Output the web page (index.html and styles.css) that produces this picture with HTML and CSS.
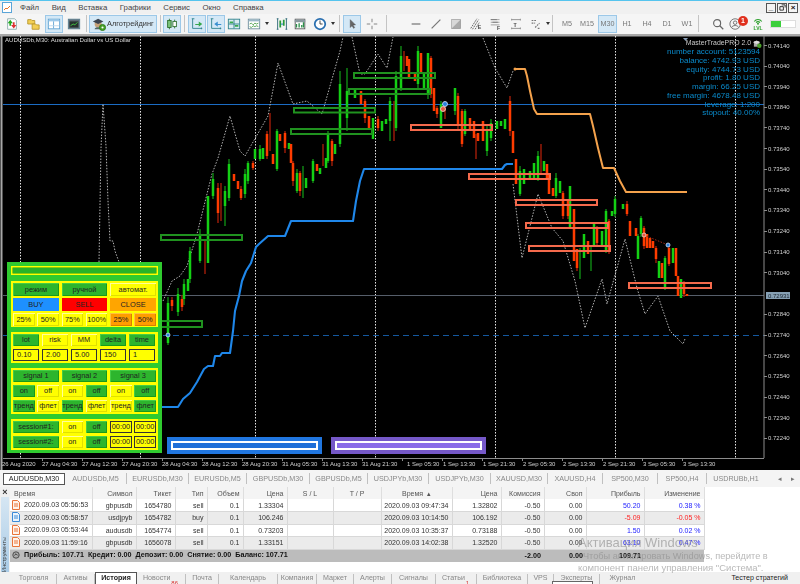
FILE: index.html
```html
<!DOCTYPE html>
<html lang="ru">
<head>
<meta charset="utf-8">
<title>MetaTrader 5</title>
<link rel="stylesheet" href="styles.css">
</head>
<body>
<div class="app">
  <div class="topline"></div>
  <header class="menu">
    <svg class="appicon" viewBox="0 0 10 11"><rect x=".5" y=".5" width="9" height="10" fill="#fff" stroke="#5aa5d8"/><path d="M2 8l2-2 1 1 3-3" fill="none" stroke="#e8742a"/></svg>
    <nav class="menuitems"><span>Файл</span><span>Вид</span><span>Вставка</span><span>Графики</span><span>Сервис</span><span>Окно</span><span>Справка</span></nav>
    <div class="winbtns">
      <span class="winbtn">_</span>
      <span class="winbtn"><svg viewBox="0 0 8 8"><path d="M3 1h4v3M1 3h4v4H1z" fill="none" stroke="#222"/></svg></span>
      <span class="winbtn winx">×</span>
    </div>
  </header>

  <div class="toolbar">
    <span class="b"><svg viewBox="0 0 16 16"><path d="M3 2h8l2 2v10H3z" fill="#fff" stroke="#8aa"/><path d="M6 3l3 4H7v3H5V7H3z" fill="#2a2"/><path d="M10 13l-3-4h2V6h2v3h2z" fill="#d33"/></svg></span>
    <span class="b m3"><svg viewBox="0 0 16 16"><path d="M2 3h4l1 1h3v4H2z" fill="#f2cf55" stroke="#b8962a"/><path d="M7 8h4l1 1h3v5H7z" fill="#f2cf55" stroke="#b8962a"/></svg></span>
    <span class="b m3 on"><svg viewBox="0 0 16 16"><rect x="1.5" y="2.5" width="13" height="11" fill="#fff" stroke="#5a9fd0"/><path d="M2 3h12v2H2z" fill="#9cc8ea"/><path d="M7.5 5v8" stroke="#5a9fd0"/><path d="M2 10h12" stroke="#b9d6ec"/></svg></span>
    <span class="b m2"><svg viewBox="0 0 16 16"><rect x="1.5" y="2.5" width="13" height="11" fill="#5e6a74" stroke="#5a7f90"/><rect x="3" y="5" width="10" height="7" fill="#26322e"/><path d="M4 10l3-2 2 1 3-3" fill="none" stroke="#4c4"/></svg></span>
    <span class="sep m3"></span>
    <span class="algo m2 on"><svg viewBox="0 0 16 16"><circle cx="7" cy="8" r="4" fill="#c7a27a"/><path d="M1 5l6-3 6 3-6 3z" fill="#3c4450"/><path d="M3 14c0-3 8-3 8 0z" fill="#566"/><circle cx="12" cy="12" r="3.5" fill="#4aa02a" stroke="#2b7a12"/><circle cx="12" cy="12" r="1.2" fill="#fff"/></svg>Алготрейдинг</span>
    <span class="sep m3"></span>
    <span class="b m2 on"><svg viewBox="0 0 16 16"><path d="M5 2v12M11 3v10" stroke="#2c6e2c"/><rect x="3" y="4" width="4" height="8" fill="#7bc47b" stroke="#2c6e2c"/><rect x="9" y="5" width="4" height="6" fill="#fff" stroke="#2c6e2c"/></svg></span>
    <span class="sep m3"></span>
    <span class="b m3 on"><svg viewBox="0 0 16 16"><path d="M3 2v11h11M2 2h3M13 12v2" fill="none" stroke="#2a7f8a"/><path d="M6 8h4V5l4 3-4 3V9H6z" fill="#36a84c"/></svg></span>
    <span class="b m1 on"><svg viewBox="0 0 16 16"><path d="M3 2v11h11M2 2h3M13 12v2" fill="none" stroke="#2a7f8a"/><path d="M14 8h-4V5L6 8l4 3V9h4z" fill="#3a8fd0"/></svg></span>
    <span class="b"><svg viewBox="0 0 16 16"><rect x="1.5" y="2.5" width="13" height="11" fill="#d8ecf2" stroke="#2a7f8a"/><path d="M8 3v10M2 8h12" stroke="#2a7f8a"/><path d="M3 6h4M9 10h4" stroke="#36a84c" stroke-width="2"/></svg></span>
    <span class="b m2"><svg viewBox="0 0 16 16"><rect x="1.5" y="2.5" width="13" height="11" fill="#fff" stroke="#6a8a9a"/><path d="M2 3h12v2H2z" fill="#9cb8c8"/><path d="M3 8l2-1 2 2 2-2 2 1 2-1M3 11l2 1 2-2 2 1 2-1 2 1" fill="none" stroke="#4aa04a"/></svg></span>
    <span class="arr"></span>
    <span class="b m2"><svg viewBox="0 0 16 16"><path d="M3 2v12M13 2v12M2 2h2M2 14h2M12 2h2M12 14h2" stroke="#22606e"/><path d="M6 4v8M10 3v7" stroke="#2a9a3a" stroke-width="2"/><circle cx="8" cy="8" r="1" fill="#3a8fd0"/></svg></span>
    <span class="b"><svg viewBox="0 0 16 16"><rect x="2.5" y="2.5" width="11" height="11" fill="#fff" stroke="#555"/><path d="M2 3h12v3H2z" fill="#8a9aa0"/><path d="M4 12V8M7 12V7M10 12V9M12 12V6" stroke="#2a8f4a" stroke-width="1.5"/></svg></span>
    <span class="b m2"><svg viewBox="0 0 16 16"><circle cx="8" cy="8" r="6" fill="#fff" stroke="#2a6fb0" stroke-width="2"/><path d="M8 4v4h3" fill="none" stroke="#333"/></svg></span>
    <span class="arr"></span>
    <span class="sep m2"></span>
    <span class="b m3 on"><svg viewBox="0 0 16 16"><path d="M6 3v9l2-2 2 3 1-1-2-3h3z" fill="#666" stroke="#444" stroke-width=".5"/></svg></span>
    <span class="b m2"><svg viewBox="0 0 16 16"><path d="M8 2v4M8 10v4M2 8h4M10 8h4" stroke="#777"/></svg></span>
    <span class="sep m5"></span>
    <span class="b m20"><svg viewBox="0 0 16 16"><path d="M3 8h10" stroke="#777" stroke-width="1.4"/></svg></span>
    <span class="b m2"><svg viewBox="0 0 16 16"><path d="M3 13L13 3" stroke="#777" stroke-width="1.4"/></svg></span>
    <span class="b m2"><svg viewBox="0 0 16 16"><rect x="3" y="3" width="10" height="10" fill="#aaa" stroke="#999"/><path d="M3 3h10L3 13z" fill="#d8d8d8"/></svg></span>
    <span class="b m2"><svg viewBox="0 0 16 16"><path d="M2 13L9 2M4 14l7-11M7 14l5-8" stroke="#555" stroke-dasharray="2 1"/><text x="10" y="14" class="ict">E</text></svg></span>
    <span class="b m2"><svg viewBox="0 0 16 16"><path d="M2 3h10M2 6h10M2 9h10" stroke="#999"/><path d="M2 3h7M4 6h6" stroke="#777"/><text x="9" y="15" class="ict">F</text></svg></span>
    <span class="b m2"><svg viewBox="0 0 16 16"><path d="M3 3h10M3 13h10M3 2v2M13 2v2M3 12v2M13 12v2" stroke="#888"/><text x="5" y="11.500" class="ict">T</text></svg></span>
    <span class="b m2"><svg viewBox="0 0 16 16"><path d="M3 4h6M3 7h4M7 12l5-5M10 13h3" stroke="#777" stroke-width="1.3" stroke-dasharray="2 1"/></svg></span>
    <span class="arr narrow"></span>
    <span class="sep m1"></span>
    <span class="tf m4">M5</span><span class="tf">M15</span><span class="tf m1 on">M30</span><span class="tf">H1</span><span class="tf">H4</span><span class="tf">D1</span><span class="tf">W1</span>
    <span class="sep m1"></span>
    <span class="b m10"><svg viewBox="0 0 16 16"><circle cx="7" cy="7" r="4" fill="none" stroke="#666" stroke-width="1.3"/><path d="M10 10l4 4" stroke="#666" stroke-width="1.5"/></svg></span>
    <span class="b user"><svg viewBox="0 0 16 16"><circle cx="7" cy="8" r="6" fill="none" stroke="#666"/><circle cx="7" cy="6.500" r="2" fill="none" stroke="#666"/><path d="M3 12c1-3 7-3 8 0" fill="none" stroke="#666"/></svg><i class="badge">1</i></span>
    <span class="b lvl m4"><svg viewBox="0 0 16 12"><path d="M3 6a6 6 0 0 1 10 0M5.500 7.500a3 3 0 0 1 5 0" fill="none" stroke="#2ca02c" stroke-width="1.4"/><circle cx="8" cy="9" r="1.300" fill="#2ca02c"/></svg><i>LVL</i></span>
    <span class="level m3"><i></i></span>
  </div>

  <main class="chart">
    <svg class="plot" viewBox="0 34 800 435" width="800" height="435">
      <path class="frame" d="M1.500 34V469M0 34.500H800"/>
      <g class="vgrid">
        <path d="M20.500 35V457M140.500 35V457M255.500 35V457M375.500 35V457M495.500 35V457M615.500 35V457M735.500 35V457"/>
      </g>
      <path class="hline" d="M3 103.500H764"/>
      <path class="gline" d="M3 294.500H764"/>
      <path class="dashline" d="M3 334.500H764"/>
      <path class="dots" d="M99 261L101 147 103 103 106 145 108 200 110 240 113 240 115 250 119 261M163 300L172 280 180 275 187 265 197 233 212 173 218 157 230 115 240 150 245 155 268 115 278 62 293 103 307 100 322 113 340 50 343 36M352 36L360 73 365 73 378 53 387 67 393 36M483 37L495 67 507 87 513 70"/>
      <path class="dots" d="M513 183L522 257 538 193 552 227 563 240 575 280 585 327 602 278 607 303 625 238 637 287 645 313 658 295 670 330 683 343 685 338"/>
      <path class="orange" d="M515 68H525L527 75 530 90 534 108 537 113H590L593 125 598 147 603 167H614L620 180 626 191H687"/>
      <circle cx="515" cy="68" r="1.500" fill="#f4a24c"/>
      <path class="blueline" d="M162 406H178L183 398 190 392 197 381 204 368 208 365H213L215 355H220L222 352H230L233 330 235 310 239 295 242 280 246 270 251 262 256 246 259 243 268 235H285L291 220H353L356 200 360 180 364 168H502L505 164 507 163H513"/>
      <path class="wg" d="M168 296V344M178 287V315M184 278V304M190 246V282M200 228V262M213 172V198M225 185V225M229 158V200M245 168V197M248 160V183M260 144V160M277 128V170M297 168V192M303 165V197M313 158V182M328 130V162M340 70V146M347 67V130M390 96V140M396 70V130M401 45V90M418 45V88M428 52V98M441 100V127M455 87V114M465 108V135M487 125V155M491 118V140M520 165V195M538 150V180M556 172V197M570 185V227M580 247V278M591 245V270M606 208V252M615 195V216M638 233V258M641 215V236M665 255V289"/>
      <path class="wr" d="M172 296V310M182 294V310M205 238V273M218 182V222M221 182V220M241 185V199M253 160V169M267 130V158M270 112V150M285 130V152M293 160V185M300 170V195M323 143V165M332 138V165M365 98V122M378 115V130M394 100V140M404 50V70M431 55V97M437 105V117M445 100V118M458 92V128M462 108V146M476 133V158M510 95V135M541 143V172M563 190V218M568 198V218M577 248V270M597 225V245M609 218V253M627 200V215M644 225V248M656 245V262M669 245V265M684 280V296"/>
      <path class="bg" d="M168 302V342M178 293V311M184 283V298M188 278V290M190 250V278M200 233V260M208 195V262M213 178V195M225 190V205M229 163V197M245 173V193M248 162V180M255 148V158M260 148V158M263 147V158M277 130V168M289 142V148M297 172V190M306 177V187M313 160V180M320 167V173M326 157V167M328 133V160M335 143V153M340 83V143M347 90V117M355 88V97M373 117V138M382 120V130M386 118V123M390 100V120M396 75V127M401 55V87M418 50V83M424 73V87M428 52V93M441 103V127M455 87V110M465 110V133M487 130V150M491 122V137M497 120V128M501 120V125M505 118V128M520 170V193M524 168V183M530 170V178M534 162V177M538 155V177M544 160V170M556 177V195M560 180V192M570 185V227M584 233V257M594 223V245M602 230V245M606 210V250M612 210V215M615 198V213M623 203V208M638 235V258M641 217V233M659 260V277M665 257V287M673 247V262M681 278V297"/>
      <path class="br" d="M172 299V305M182 298V306M218 187V212M234 173V180M238 180V188M241 188V197M253 162V167M267 133V155M273 153V163M280 133V140M285 132V147M291 143V162M293 162V180M300 172V190M317 163V170M332 140V160M361 90V103M365 100V117M369 115V128M378 118V127M407 55V65M409 58V78M415 73V80M421 52V73M431 57V93M434 87V110M437 107V113M458 95V123M462 110V143M470 117V130M474 120V137M478 132V140M483 120V140M510 100V130M513 130V152M516 158V183M547 163V177M549 173V193M553 187V195M563 192V215M568 200V215M574 208V260M577 248V267M588 240V253M597 227V242M609 220V250M627 203V213M630 220V235M636 227V235M644 227V245M647 233V247M650 237V247M653 240V247M656 247V258M662 262V277M669 247V263M676 247V275M678 275V295M684 282V293M687 293V295"/>
      <g class="zg">
        <rect x="161" y="234" width="81" height="5"/>
        <rect x="291" y="128" width="81" height="5"/>
        <rect x="294" y="107" width="81" height="4.500"/>
        <rect x="349" y="88" width="81" height="5"/>
        <rect x="354" y="72" width="81" height="5"/>
        <rect x="122" y="320" width="80" height="6"/>
      </g>
      <g class="zr">
        <rect x="411" y="124" width="81" height="5"/>
        <rect x="469" y="173" width="81" height="5"/>
        <rect x="516" y="199" width="81" height="5"/>
        <rect x="526" y="222" width="82" height="5"/>
        <rect x="529" y="245" width="81" height="5"/>
        <rect x="629" y="282" width="82" height="5"/>
      </g>
      <path class="trade" d="M644 234L668 244"/>
      <circle class="mk-b" cx="445" cy="103" r="2.500"/>
      <circle class="mk-r" cx="443" cy="108" r="2.500"/>
      <circle class="mk-r" cx="644" cy="234" r="2"/>
      <circle class="mk-b" cx="668" cy="244" r="2"/>
      <circle class="mk-b" cx="168" cy="334" r="2"/>
      <g class="boxes">
        <rect class="bb" x="167" y="436" width="155" height="17"/>
        <rect class="bi" x="172" y="441" width="145" height="7"/>
        <rect class="pb" x="331" y="436" width="155" height="17"/>
        <rect class="pi" x="336" y="441" width="145" height="7"/>
      </g>
      <path class="axis" d="M764 35V457M3 457.500H764"/>
      <path class="ticks" d="M764 44.500h3M764 65.500h3M764 85.500h3M764 106.500h3M764 126.500h3M764 147.500h3M764 168.500h3M764 188.500h3M764 209.500h3M764 230.500h3M764 251.500h3M764 271.500h3M764 313.500h3M764 334.500h3M764 354.500h3M764 375.500h3M764 396.500h3M764 416.500h3M764 437.500h3M42.500 457v3M82.500 457v3M122.500 457v3M162.500 457v3M202.500 457v3M242.500 457v3M282.500 457v3M322.500 457v3M362.500 457v3M402.500 457v3M442.500 457v3M482.500 457v3M522.500 457v3M562.500 457v3M602.500 457v3M642.500 457v3M682.500 457v3"/>
      <g class="prices">
        <text x="768" y="46.500">0.74140</text><text x="768" y="67">0.74040</text><text x="768" y="87.500">0.73940</text><text x="768" y="108">0.73840</text>
        <text x="768" y="128.500">0.73740</text><text x="768" y="149.500">0.73640</text><text x="768" y="170">0.73540</text><text x="768" y="190.500">0.73440</text>
        <text x="768" y="211">0.73340</text><text x="768" y="232">0.73240</text><text x="768" y="253">0.73140</text><text x="768" y="273.500">0.73040</text>
        <text x="768" y="315">0.72840</text><text x="768" y="336">0.72740</text><text x="768" y="356.500">0.72640</text><text x="768" y="377">0.72540</text>
        <text x="768" y="398">0.72440</text><text x="768" y="418.500">0.72340</text><text x="768" y="439">0.72240</text>
      </g>
      <rect class="pricebox" x="766" y="291" width="24" height="7"/>
      <text class="pricecur" x="768" y="296.500">0.72931</text>
      <g class="times">
        <text x="2" y="465">26 Aug 2020</text><text x="42" y="465">27 Aug 04:30</text><text x="82" y="465">27 Aug 12:30</text><text x="122" y="465">27 Aug 20:30</text>
        <text x="162" y="465">28 Aug 04:30</text><text x="202" y="465">28 Aug 12:30</text><text x="242" y="465">28 Aug 20:30</text><text x="282" y="465">31 Aug 05:30</text>
        <text x="322" y="465">31 Aug 13:30</text><text x="362" y="465">31 Aug 21:30</text><text x="407" y="465">1 Sep 05:30</text><text x="443" y="465">1 Sep 13:30</text>
        <text x="483" y="465">1 Sep 21:30</text><text x="523" y="465">2 Sep 05:30</text><text x="563" y="465">2 Sep 13:30</text><text x="603" y="465">2 Sep 21:30</text>
        <text x="643" y="465">3 Sep 05:30</text><text x="683" y="465">3 Sep 13:30</text>
      </g>
      <text class="sym" x="5" y="40.500">AUDUSDb,M30:  Australian Dollar vs US Dollar</text>
      <path d="M683 37h5l-2.500 3z" fill="#8aa0b8"/>
    </svg>

    <aside class="ea">
      <div class="eahead">MasterTradePRO 2.0 <svg viewBox="0 0 10 10"><rect x="1" y="2" width="6" height="6" fill="#aaa"/><circle cx="7" cy="7" r="2.500" fill="#4aa02a"/><path d="M0 3l4-2 4 2-4 2z" fill="#ddd"/></svg></div>
      <div>number account: 5123594</div>
      <div>balance: 4742.93 USD</div>
      <div>equity: 4744.73 USD</div>
      <div>profit: 1.80 USD</div>
      <div>margin: 66.25 USD</div>
      <div>free margin: 4678.48 USD</div>
      <div>leverage: 1:200</div>
      <div>stopout: 40.00%</div>
    </aside>

    <section class="panel">
      <div class="psec pbar"><i></i></div>
      <div class="psec six">
        <span class="btn g w2">режим</span><span class="btn g w2">ручной</span><span class="btn y w2">автомат.</span>
        <span class="btn buy w2">BUY</span><span class="btn sell w2">SELL</span><span class="btn close w2">CLOSE</span>
        <span class="btn y">25%</span><span class="btn y">50%</span><span class="btn y">75%</span><span class="btn y">100%</span><span class="btn o">25%</span><span class="btn o">50%</span>
      </div>
      <div class="psec five">
        <span class="btn g">lot</span><span class="btn y">risk</span><span class="btn y">MM</span><span class="btn g">delta</span><span class="btn g">time</span>
        <span class="inp">0.10</span><span class="inp">2.00</span><span class="inp">5.00</span><span class="inp">150</span><span class="inp">1</span>
      </div>
      <div class="psec six loose">
        <span class="btn g w2">signal 1</span><span class="btn g w2">signal 2</span><span class="btn g w2">signal 3</span>
        <span class="btn g">on</span><span class="btn y">off</span><span class="btn y">on</span><span class="btn g">off</span><span class="btn y">on</span><span class="btn g">off</span>
        <span class="btn g">тренд</span><span class="btn y">флет</span><span class="btn g">тренд</span><span class="btn y">флет</span><span class="btn y">тренд</span><span class="btn g">флет</span>
      </div>
      <div class="psec six loose2">
        <span class="btn g w2">session#1:</span><span class="btn y">on</span><span class="btn g">off</span><span class="inp c">00:00</span><span class="inp c">00:00</span>
        <span class="btn g w2">session#2:</span><span class="btn y">on</span><span class="btn g">off</span><span class="inp c">00:00</span><span class="inp c">00:00</span>
      </div>
    </section>
  </main>

  <div class="charttabs">
    <span class="ct active">AUDUSDb,M30</span><span class="ct">AUDUSDb,M5</span><span class="ct">EURUSDb,M30</span><span class="ct">EURUSDb,M5</span><span class="ct">GBPUSDb,M30</span><span class="ct">GBPUSDb,M5</span><span class="ct">USDJPYb,M30</span><span class="ct">USDJPYb,M30</span><span class="ct">XAUUSD,M30</span><span class="ct">XAUUSD,H4</span><span class="ct">SP500,M30</span><span class="ct">SP500,H4</span><span class="ct">USDRUBb,H1</span>
    <span class="ctarrows"><span>◂</span><span>▸</span></span>
  </div>

  <div class="toolbox">
    <div class="side"><span class="sidex">×</span><div class="sidestrip"><span>Инструменты</span></div></div>
    <div class="history">
      <table>
        <colgroup>
          <col class="c82"><col class="c44"><col class="c39"><col class="c32"><col class="c36"><col class="c44"><col class="c46"><col class="c48"><col class="c71"><col class="c49"><col class="c43"><col class="c42"><col class="c58"><col class="c60">
        </colgroup>
        <thead>
          <tr><th class="l">Время</th><th>Символ</th><th>Тикет</th><th>Тип</th><th>Объем</th><th>Цена</th><th class="m">S / L</th><th class="m">T / P</th><th class="m">Время &nbsp;▴</th><th>Цена</th><th>Комиссия</th><th>Своп</th><th>Прибыль</th><th>Изменение</th></tr>
        </thead>
        <tbody>
          <tr><td class="l"><span class="tm"><svg class="doc" viewBox="0 0 8 10"><path d="M.5.5h5l2 2v7h-7z" fill="#fff3ea" stroke="#e8743a"/><path d="M2 4h4M2 6h4" stroke="#e8743a"/></svg>2020.09.03 05:56:53</span></td><td>gbpusdb</td><td>1654780</td><td>sell</td><td>0.1</td><td>1.33304</td><td></td><td></td><td>2020.09.03 09:47:34</td><td>1.32802</td><td>-0.50</td><td>0.00</td><td class="pos">50.20</td><td class="pos">0.38 %</td></tr>
          <tr><td class="l"><span class="tm"><svg class="doc" viewBox="0 0 8 10"><path d="M.5.5h5l2 2v7h-7z" fill="#eaf4fc" stroke="#3a8ad8"/><path d="M2 4h4M2 6h4" stroke="#3a8ad8"/></svg>2020.09.03 05:58:57</span></td><td>usdjpyb</td><td>1654782</td><td>buy</td><td>0.1</td><td>106.246</td><td></td><td></td><td>2020.09.03 10:14:50</td><td>106.192</td><td>-0.50</td><td>0.00</td><td class="neg">-5.09</td><td class="neg">-0.05 %</td></tr>
          <tr><td class="l"><span class="tm"><svg class="doc" viewBox="0 0 8 10"><path d="M.5.5h5l2 2v7h-7z" fill="#fff3ea" stroke="#e8743a"/><path d="M2 4h4M2 6h4" stroke="#e8743a"/></svg>2020.09.03 05:53:44</span></td><td>audusdb</td><td>1654774</td><td>sell</td><td>0.1</td><td>0.73203</td><td></td><td></td><td>2020.09.03 10:35:37</td><td>0.73188</td><td>-0.50</td><td>0.00</td><td class="pos">1.50</td><td class="pos">0.02 %</td></tr>
          <tr><td class="l"><span class="tm"><svg class="doc" viewBox="0 0 8 10"><path d="M.5.5h5l2 2v7h-7z" fill="#fff3ea" stroke="#e8743a"/><path d="M2 4h4M2 6h4" stroke="#e8743a"/></svg>2020.09.03 11:59:16</span></td><td>gbpusdb</td><td>1656078</td><td>sell</td><td>0.1</td><td>1.33151</td><td></td><td></td><td>2020.09.03 14:02:38</td><td>1.32520</td><td>-0.50</td><td>0.00</td><td class="pos">63.10</td><td class="pos">0.47 %</td></tr>
        </tbody>
        <tfoot>
          <tr><td colspan="10" class="l sum"><span class="tm"><svg class="doc" viewBox="0 0 10 10"><circle cx="5" cy="5" r="4" fill="#aaa" stroke="#333"/><path d="M3 5.500l2-2 2 2" fill="none" stroke="#222"/></svg>Прибыль: 107.71&nbsp; Кредит: 0.00&nbsp; Депозит: 0.00&nbsp; Снятие: 0.00&nbsp; Баланс: 107.71</span></td><td>-2.00</td><td>0.00</td><td>109.71</td><td></td></tr>
        </tfoot>
      </table>
    </div>
  </div>

  <div class="bottomtabs">
    <span class="bt">Торговля</span><span class="bt">Активы</span><span class="bt active">История</span><span class="bt news">Новости<sub>86</sub></span><span class="bt">Почта</span><span class="bt">Календарь</span><span class="bt">Компания</span><span class="bt">Маркет</span><span class="bt">Алерты</span><span class="bt">Сигналы</span><span class="bt news">Статьи<sub>1</sub></span><span class="bt">Библиотека</span><span class="bt">VPS</span><span class="bt">Эксперты</span><span class="bt last">Журнал</span>
    <span class="tester">Тестер стратегий</span>
  </div>

  <div class="watermark">
    <div class="wm1">Активация Windows</div>
    <div class="wm2">Чтобы активировать Windows, перейдите в</div>
    <div class="wm3">компонент панели управления "Система".</div>
  </div>
  <div class="tipbox"></div>
</div>
</body>
</html>
```

FILE: styles.css
```css
* { box-sizing: border-box; }
html, body { margin: 0; padding: 0; background: #f0f0f0; }
.app {
  position: relative;
  width: 800px;
  height: 584px;
  overflow: hidden;
  display: flex;
  flex-direction: column;
  font: 7.1px/1 "Liberation Sans", Arial, sans-serif;
  color: #333;
  filter: blur(.25px);
}
.topline { height: 1px; background: #55c4ee; flex: none; }

/* menu */
.menu { height: 13px; flex: none; display: flex; align-items: center; background: #f0f0f0; padding-left: 2px; }
.appicon { width: 10px; height: 11px; flex: none; }
.menuitems { display: flex; gap: 12.5px; margin-left: 8px; font-size: 7.8px; color: #444; }
.winbtns { margin-left: auto; display: flex; gap: 1px; padding-right: 2px; }
.winbtn { width: 10px; height: 10px; border: 1px solid #555; background: #f4f4f4; display: flex; align-items: center; justify-content: center; font-size: 8px; font-weight: bold; color: #111; }
.winbtn svg { width: 7px; height: 7px; }

/* toolbar */
.toolbar { height: 21px; flex: none; display: flex; align-items: center; padding: 0 0 1px 3px; background: #f5f5f5; border-bottom: 1px solid #a8a8a8; }
.b { width: 18px; height: 18px; flex: none; display: flex; align-items: center; justify-content: center; position: relative; }
.b svg { width: 14px; height: 14px; }
.ict { font: bold 6px "Liberation Sans", sans-serif; fill: #444; }
.on { background: #d4e8f6; box-shadow: inset 0 0 0 1px #9cc8e8; }
.sep { width: 1px; height: 17px; background: #c4c4c4; flex: none; }
.m1 { margin-left: 1px; } .m2 { margin-left: 2px; } .m3 { margin-left: 3px; } .m4 { margin-left: 4px; }
.m5 { margin-left: 5px; } .m10 { margin-left: 10px; } .m20 { margin-left: 20px; }
.algo { width: 68px; height: 18px; flex: none; display: flex; align-items: center; gap: 1px; padding-left: 3px; font-size: 7.4px; color: #333; }
.algo svg { width: 14px; height: 14px; flex: none; }
.arr { width: 8px; height: 18px; flex: none; display: flex; align-items: center; justify-content: center; }
.arr::after { content: ""; border: 2.5px solid transparent; border-top: 3px solid #333; border-bottom: 0; }
.arr.narrow { width: 6px; }
.tf { width: 20px; height: 18px; flex: none; display: flex; align-items: center; justify-content: center; color: #777; font-size: 7.2px; }
.tf.on { width: 19px; }
.user { overflow: visible; }
.badge { position: absolute; right: -3px; top: 1px; width: 10px; height: 10px; border-radius: 50%; background: #e0301e; color: #fff; font: bold 7px/10px "Liberation Sans", sans-serif; text-align: center; }
.lvl { flex-direction: column; }
.lvl svg { width: 12px; height: 9px; }
.lvl i { font: bold 5px/1 "Liberation Sans", sans-serif; color: #2ca02c; }
.level { width: 26px; height: 8px; background: #fff; border: 1px solid #ddd; flex: none; display: block; }
.level i { display: block; width: 10px; height: 6px; background: #3ccf3c; }

/* chart */
.chart { position: relative; height: 435px; flex: none; background: #000; overflow: hidden; }
.plot { display: block; }
.frame { fill: none; stroke: #a8a8a8; stroke-width: 2; }
.vgrid path { fill: none; stroke: #e6e6e6; stroke-width: 1; stroke-dasharray: 1.5 1.5; }
.hline { fill: none; stroke: #1b6cc4; stroke-width: 1.2; }
.gline { fill: none; stroke: #565e6a; stroke-width: 1; }
.dashline { fill: none; stroke: #14589f; stroke-width: 1; stroke-dasharray: 6 4; }
.dots { fill: none; stroke: #b4b4b4; stroke-width: 1; stroke-dasharray: 1.5 1.5; }
.orange { fill: none; stroke: #f4a24c; stroke-width: 2; stroke-linejoin: round; }
.blueline { fill: none; stroke: #1f87ea; stroke-width: 2.1; stroke-linejoin: round; }
.wg { fill: none; stroke: #0e7a12; stroke-width: 1.6; }
.wr { fill: none; stroke: #8e1a08; stroke-width: 1.6; }
.bg { fill: none; stroke: #14d014; stroke-width: 2.5; }
.br { fill: none; stroke: #ff3c00; stroke-width: 2.5; }
.zg rect { fill: none; stroke: #20921f; stroke-width: 2; }
.zr rect { fill: none; stroke: #f56a4c; stroke-width: 2; }
.trade { fill: none; stroke: #a02818; stroke-width: 1; stroke-dasharray: 1.5 1.5; }
.mk-b { fill: #2a7fdc; stroke: #cfe2f6; stroke-width: .8; }
.mk-r { fill: #e25a40; stroke: #f6d8d0; stroke-width: .8; }
.bb { fill: #2076e0; }
.bi { fill: #1f6fd8; stroke: #fff; stroke-width: 2; }
.pb { fill: #7558c8; }
.pi { fill: #8a6ce8; stroke: #fff; stroke-width: 2; }
.axis, .ticks { fill: none; stroke: #8c8c8c; stroke-width: 1; }
.prices text, .times text { font: 6px "Liberation Sans", sans-serif; fill: #d0d0d0; }
.pricebox { fill: #86a0b4; }
.pricecur { font: 6px "Liberation Sans", sans-serif; fill: #1a2530; }
.sym { font: 6.1px "Liberation Sans", sans-serif; fill: #dcdcdc; }

/* EA info block */
.ea { position: absolute; right: 40px; top: 4px; text-align: right; font-size: 8px; line-height: 8.75px; color: #0a8acb; }
.eahead { color: #c8c8c8; font-size: 6.9px; display: flex; justify-content: flex-end; align-items: center; gap: 2px; margin-right: -2px; height: 9px; }
.eahead svg { width: 9px; height: 10px; }

/* trade panel */
.panel { position: absolute; left: 7px; top: 227px; width: 155px; height: 191px; padding: 4px; background: #2fcb2f; display: flex; flex-direction: column; gap: 5px; color: #222; font-size: 7.4px; }
.psec { background: #ffff00; padding: 2px; }
.pbar { height: 9px; margin-bottom: 1px; }
.pbar i { display: block; height: 5px; background: #28b428; box-shadow: 0 0 0 .5px #169a16; }
.six { display: grid; grid-template-columns: repeat(6, 21.6px); column-gap: 2.7px; grid-auto-rows: 13px; row-gap: 2px; height: 46px; padding-top: 2px; }
.five { display: grid; grid-template-columns: repeat(5, 26px); column-gap: 3px; grid-auto-rows: 12px; row-gap: 3px; height: 31px; }
.six.loose { grid-auto-rows: 12px; row-gap: 3px; }
.six.loose2 { grid-auto-rows: 12px; row-gap: 3px; height: 31px; }
.btn { display: flex; align-items: center; justify-content: center; white-space: nowrap; }
.w2 { grid-column: span 2; }
.g { background: #2db52d; box-shadow: inset 1px 1px 0 #44cc44, inset -1px -1px 0 #1a9a1a; }
.y { background: #ffff00; box-shadow: inset 1px 1px 0 #ffff99, inset -1px -1px 0 #e0e000; }
.o { background: #ff9c00; box-shadow: inset 1px 1px 0 #ffc040, inset -1px -1px 0 #d88000; }
.buy { background: #1e90ff; }
.sell { background: #ff0000; }
.close { background: #ffa500; }
.inp { display: flex; align-items: center; padding-left: 3px; background: #ffff00; border: 1px solid #333; }
.inp.c { justify-content: center; padding-left: 0; }

/* chart tabs */
.charttabs { height: 17px; flex: none; display: grid; grid-template-columns: 62px 62px 62px 58px 63px 58px 61px 62px 57px 55px 55px 49px 58px auto; align-items: center; padding: 0 0 0 3px; background: #f4f4f4; font-size: 7.2px; color: #888; }
.ct { height: 11px; display: flex; align-items: center; justify-content: center; border-right: 1px solid #c0c0c0; white-space: nowrap; }
.ct.active { height: 12px; background: #fff; border: 1px solid #555; color: #222; }
.ct:nth-child(13) { border-right: 0; }
.ctarrows { display: flex; justify-content: flex-end; gap: 9px; padding-right: 5px; color: #777; font-size: 7px; }

/* toolbox */
.toolbox { height: 85px; flex: none; display: flex; background: #fff; }
.side { width: 10px; flex: none; display: flex; flex-direction: column; align-items: center; background: #f0f0f0; }
.sidex { height: 10px; line-height: 10px; font-size: 9px; font-weight: bold; color: #333; }
.sidestrip { flex: 1; width: 8px; background: linear-gradient(#d6e6f3, #a9cbe6); overflow: hidden; display: flex; align-items: flex-end; justify-content: center; }
.sidestrip span { writing-mode: vertical-rl; transform: rotate(180deg); font-size: 5.6px; color: #333; white-space: nowrap; }
.history { flex: 1; overflow: hidden; }
table { width: 694px; table-layout: fixed; border-collapse: collapse; font-size: 7px; }
.c82 { width: 82px; } .c44 { width: 44px; } .c39 { width: 39px; } .c32 { width: 32px; } .c36 { width: 36px; }
.c46 { width: 46px; } .c48 { width: 48px; } .c71 { width: 71px; } .c49 { width: 49px; } .c43 { width: 43px; }
.c42 { width: 42px; } .c58 { width: 58px; } .c60 { width: 60px; }
th, td { padding: 0 3px 0 0; text-align: right; white-space: nowrap; font-weight: normal; overflow: hidden; }
th { height: 12px; color: #555; background: #f4f4f4; border-right: 1px solid #dedede; }
tbody td { height: 12.500px; border-right: 1px solid #d8d8d8; border-bottom: 1px solid #d8d8d8; color: #333; }
tbody tr:nth-child(even) td { background: #ebebeb; }
th.l { text-align: left; padding-left: 4px; }
th.m { text-align: center; padding: 0; }
td.l { text-align: left; padding-left: 2px; }
.tm { display: inline-flex; align-items: center; gap: 4px; }
.doc { width: 8px; height: 10px; flex: none; }
.pos { color: #2222ff; }
.neg { color: #ff2222; }
tfoot td { height: 12.500px; background: #bcbcbc; color: #111; font-weight: bold; font-size: 7.2px; }
.sum .doc { width: 8px; height: 8px; }

/* bottom tabs */
.bottomtabs { height: 13px; flex: none; display: grid; grid-template-columns: 46px 38px 42px 49px 33px 59px 39px 37px 38px 44px 41px 51px 26px 46px 45px 1fr; align-items: center; padding-left: 11px; background: #f0f0f0; color: #888; font-size: 7.1px; }
.bt { height: 10px; display: flex; align-items: center; justify-content: center; border-right: 1px solid #c0c0c0; position: relative; white-space: nowrap; }
.bt.active { height: 13px; background: #fff; border: 1px solid #555; border-bottom: 0; color: #222; font-weight: bold; }
.bt.last { border-right: 0; }
.news { justify-content: flex-start; padding-left: 6px; }
.bt sub { position: absolute; right: 7px; bottom: -2px; font-size: 6px; line-height: 1; color: #d83030; vertical-align: baseline; }
.tester { justify-self: end; padding-right: 12px; color: #222; }

/* overlays */
.watermark { position: absolute; left: 578px; top: 535px; color: rgba(140, 140, 140, .62); pointer-events: none; }
.wm1 { font-size: 13px; line-height: 15px; }
.wm2 { font-size: 9.2px; line-height: 12px; margin-left: 5px; }
.wm3 { font-size: 9.5px; line-height: 12px; }
.tipbox { position: absolute; left: 552px; top: 581px; width: 41px; height: 6px; background: #fff; border: 1px solid #666; }
```
